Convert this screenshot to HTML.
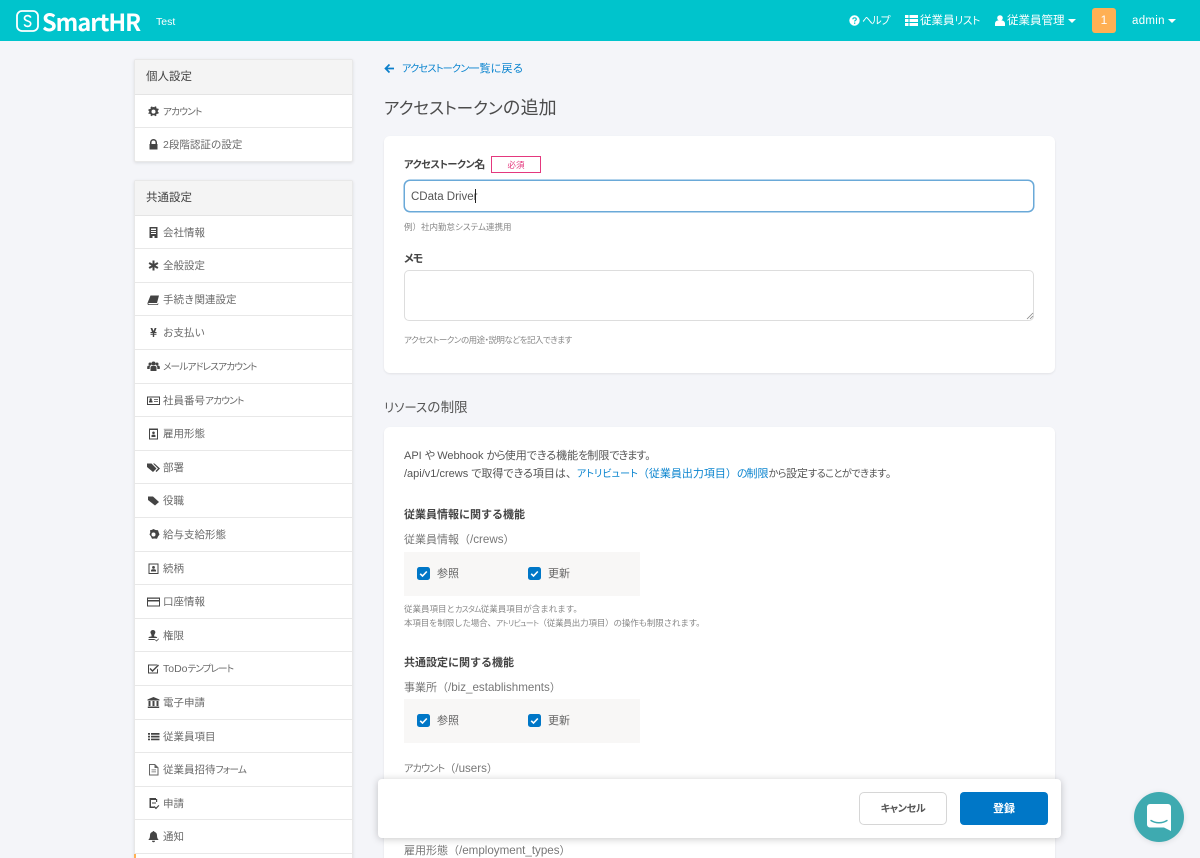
<!DOCTYPE html>
<html lang="ja"><head><meta charset="utf-8"><title>SmartHR</title>
<style>
*{box-sizing:border-box}
html,body{margin:0;padding:0;width:1200px;height:858px;overflow:hidden;background:#f4f5f9}
body{position:relative;font-family:"Liberation Sans","Noto Sans CJK JP",sans-serif;color:#444}
i{font-style:normal}
i.k{font-feature-settings:"palt";font-size:.92em;letter-spacing:-.085em}
i.h{font-feature-settings:"palt";letter-spacing:-.09em}
i.p{font-feature-settings:"palt"}
i.l{font-size:11.6px}
.a{position:absolute;white-space:nowrap}
.t{position:absolute;white-space:nowrap;line-height:16px;height:16px;margin-top:1px}
.hd{left:0;top:0;width:1200px;height:41px;background:#00c4cc}
.w{color:#fff;font-size:11.5px;font-weight:400}
.box{position:absolute;left:134px;width:219px;background:#fff;border:1px solid #e8e8e8;box-shadow:0 1px 3px rgba(0,0,0,.1);border-radius:2px}
.sh{position:absolute;left:0;right:0;top:0;height:34.6px;background:#f4f4f4;border-bottom:1px solid #e4e4e4;font-size:11.5px;line-height:35px;padding-left:11px;color:#444}
.r{position:absolute;left:0;right:0;height:33.6px;border-bottom:1px solid #e8e8e8}
.r span{position:absolute;left:28px;top:9px;font-size:10.5px;line-height:16px;color:#6a6a6a;white-space:nowrap}
.r svg{position:absolute;left:12px;top:10px;width:13px;height:13px;fill:#444}
.card{position:absolute;left:384px;width:670.5px;background:#fff;border-radius:6px;box-shadow:0 1px 2px rgba(0,0,0,.08)}
.lb{font-size:11px;font-weight:700;color:#444}
.hint{font-size:8.5px;color:#888;margin-top:0}
.sub{font-size:11px;color:#777}
.chk{position:absolute;width:13px;height:13px;background:#0077c7;border-radius:2.5px}
.chk svg{position:absolute;left:0;top:0;width:13px;height:13px}
.cbx{position:absolute;left:404px;width:236px;height:44px;background:#f8f7f6}
.cl{font-size:11px;color:#666}
a{color:#0a84cf;text-decoration:none}
</style></head><body>

<div class="a hd"></div>
<svg class="a" style="left:16px;top:10px" width="23" height="22" viewBox="0 0 23 22"><rect x="1" y="1" width="21" height="20" rx="5" fill="none" stroke="#fff" stroke-width="1.8"/><path d="M14.8 7.6c-.6-1.3-1.9-2-3.3-2-1.800 0-3 1.200-3 2.700 0 3.400 6.200 2 6.200 5.300 0 1.600-1.300 2.800-3.100 2.800-1.500 0-2.700-.8-3.300-2.100" fill="none" stroke="#fff" stroke-width="1.700"/></svg>
<div class="a" style="left:42px;top:6px;font-family:'Noto Sans CJK JP','Liberation Sans',sans-serif;font-size:23.5px;letter-spacing:-1px;line-height:30px;font-weight:700;color:#fff">SmartHR</div>
<div class="t w" style="left:156px;top:13px;font-size:10.5px">Test</div>

<svg class="a" style="left:849px;top:15px" width="11" height="11" viewBox="0 0 11 11"><circle cx="5.500" cy="5.500" r="5.200" fill="#fff"/><path d="M3.800 4.300c.1-1 .9-1.500 1.800-1.500 1 0 1.700.6 1.700 1.400 0 1.200-1.700 1.200-1.700 2.300" fill="none" stroke="#00c4cc" stroke-width="1.200"/><rect x="5" y="7.500" width="1.300" height="1.300" fill="#00c4cc"/></svg>
<div class="t w" style="left:862px;top:12px"><i class="k">ヘルプ</i></div>
<svg class="a" style="left:905px;top:15px" width="13" height="11" viewBox="0 0 13 11" fill="#fff"><rect x="0" y="0" width="3.500" height="3"/><rect x="4.500" y="0" width="8.500" height="3"/><rect x="0" y="4" width="3.500" height="3"/><rect x="4.500" y="4" width="8.500" height="3"/><rect x="0" y="8" width="3.500" height="3"/><rect x="4.500" y="8" width="8.500" height="3"/></svg>
<div class="t w" style="left:920px;top:12px">従業員<i class="k" style="letter-spacing:-.02em">リスト</i></div>
<svg class="a" style="left:995px;top:15px" width="10" height="11" viewBox="0 0 10 11" fill="#fff"><circle cx="5" cy="3" r="2.800"/><path d="M0 11V8.500C0 6.800 1.500 5.500 3 5.500h4c1.500 0 3 1.300 3 3V11z"/></svg>
<div class="t w" style="left:1007px;top:12px">従業員管理</div>
<svg class="a" style="left:1068px;top:19px" width="8" height="4" viewBox="0 0 8 4"><path d="M0 0h8L4 4z" fill="#fff"/></svg>
<div class="a" style="left:1092px;top:8px;width:24px;height:25px;background:#ffb054;border-radius:3px;color:#fff;font-size:12px;line-height:25px;text-align:center">1</div>
<div class="t w" style="left:1132px;top:12px;font-size:11.5px;letter-spacing:.3px">admin</div>
<svg class="a" style="left:1168px;top:19px" width="8" height="4" viewBox="0 0 8 4"><path d="M0 0h8L4 4z" fill="#fff"/></svg>

<!-- sidebar 1 -->
<div class="box" style="top:59px;height:103px">
<div class="sh">個人設定</div>
<div class="r" style="top:34.600px"><svg viewBox="0 0 13 13"><path d="M6.500 2l1 .2.5-1 1.500.7-.3 1.100.9.800 1-.4.700 1.500-1 .6v1.400l1 .6-.7 1.500-1-.4-.9.8.3 1.100-1.500.7-.5-1H5.500l-.5 1-1.500-.7.3-1.100-.9-.8-1 .4L1.200 8l1-.6V6l-1-.6.7-1.500 1 .4.900-.8-.3-1.100L5 1.200l.5 1zm0 2.600a2 2 0 100 4 2 2 0 000-4z"/></svg><span><i class="k">アカウント</i></span></div>
<div class="r" style="top:68.200px;border:0"><svg viewBox="0 0 13 13"><path d="M3 6V4.500a3.500 3.500 0 017 0V6h.5v5.500h-8V6zm1.500 0h4V4.500a2 2 0 00-4 0z"/></svg><span>2段階認証の設定</span></div>
</div>

<!-- sidebar 2 -->
<div class="box" style="top:180px;height:690px">
<div class="sh">共通設定</div>
<div class="r" style="top:34.600px"><svg viewBox="0 0 13 13"><path d="M2.500 1h8v11h-3v-2h-2v2h-3zM4 2.500v1.500h5V2.500zM4 5v1h5V5zM4 7v1h5V7z"/></svg><span>会社情報</span></div>
<div class="r" style="top:68.200px"><svg viewBox="0 0 13 13"><path d="M5.500 1.500h2v3.300l2.900-1.700 1 1.800-2.900 1.600 2.900 1.600-1 1.800-2.900-1.700v3.300h-2V8.200L2.600 9.900l-1-1.800 2.900-1.600-2.900-1.600 1-1.800 2.900 1.700z"/></svg><span>全般設定</span></div>
<div class="r" style="top:101.800px"><svg viewBox="0 0 13 13"><path d="M3.500 2.500h8.500l-2 7.500H2c-.8 0-1 1.200 0 1.200h8.500l.3-.9.700.2-.6 1.500H1.800C.5 12 .3 10.800.7 9.500z"/></svg><span>手続き関連設定</span></div>
<div class="r" style="top:135.400px"><svg viewBox="0 0 13 13"><path d="M3.500 2h1.800l1.200 3 1.200-3h1.800L8 6h1.500v1H7.200v.8h2.300v1H7.200V11H5.800V8.800H3.500v-1h2.300V7H3.500V6H5z"/></svg><span>お支払い</span></div>
<div class="r" style="top:169px"><svg viewBox="0 0 13 13"><circle cx="3" cy="4" r="1.500"/><circle cx="10" cy="4" r="1.500"/><circle cx="6.500" cy="3.500" r="2"/><path d="M.2 9V7c0-1 .8-1.500 2-1.500l1 .3-.5 1.500V9zM12.800 9V7c0-1-.8-1.500-2-1.500l-1 .3.500 1.500V9zM3.500 11V7.500c0-1 .8-1.500 1.500-1.500h3c.7 0 1.500.5 1.500 1.500V11z"/></svg><span><i class="k">メールアドレスアカウント</i></span></div>
<div class="r" style="top:202.600px"><svg viewBox="0 0 13 13"><path d="M0 2.500h13v8.500H0zm1 1v6.500h11V3.500zM2 8.500V7.500c0-.7.500-1 1-1h1.500c.5 0 1 .3 1 1v1zM3.700 4.300a1.200 1.200 0 110 2.400 1.200 1.200 0 010-2.400zM7 5h4v.8H7zM7 7h4v.8H7z"/></svg><span>社員番号<i class="k">アカウント</i></span></div>
<div class="r" style="top:236.200px"><svg viewBox="0 0 13 13"><path d="M2 1.500h9v11H2zm1 1.500v8.500h7V3zM6.500 4.500a1.300 1.300 0 110 2.600 1.300 1.300 0 010-2.600zM4.500 10V8.800c0-.8.700-1.200 1.300-1.200h1.400c.6 0 1.300.4 1.300 1.200V10z"/></svg><span>雇用形態</span></div>
<div class="r" style="top:269.800px"><svg viewBox="0 0 13 13"><path d="M0 2.500h4.500l5 5-3.500 3.500L0 6zM6 2.500h1.500l5.500 5-3.500 3.500-1-1 2.500-2.500z"/></svg><span>部署</span></div>
<div class="r" style="top:303.400px"><svg viewBox="0 0 13 13"><path d="M1 2.500h5l6 5.500-4 3.500-7-5.500z"/></svg><span>役職</span></div>
<div class="r" style="top:337px"><svg viewBox="0 0 13 13"><path d="M6.500 1l2 1 2.500.3.700 2.200.800 2-1.500 2-1 2.200-2.500-.2-2.500.2-1-2.200-1.500-2 .8-2L3 2.300 4.500 2zM6.500 4.500a2 2 0 100 4 2 2 0 000-4z"/></svg><span>給与支給形態</span></div>
<div class="r" style="top:370.600px"><svg viewBox="0 0 13 13"><path d="M1.500 1.500h10v10.500h-10zm1 1v8.500h8V2.500zM6.500 4a1.400 1.400 0 110 2.800 1.400 1.400 0 010-2.800zM4 9.500V8.500c0-.9.800-1.300 1.500-1.300h2c.7 0 1.500.4 1.500 1.300v1z"/></svg><span>続柄</span></div>
<div class="r" style="top:404.200px"><svg viewBox="0 0 13 13"><path d="M0 2.500h13v9H0zm1 1.200v1.300h11V3.700zM1 6.500v4h11v-4z"/></svg><span>口座情報</span></div>
<div class="r" style="top:437.800px"><svg viewBox="0 0 13 13"><path d="M6 1a2.300 2.300 0 012 3.500L7.200 6v1.500c1.500 0 3 .4 3 1.500H1.500c0-1.100 1.500-1.500 3-1.500V6l-.7-1.500A2.300 2.300 0 016 1zM1.500 10h6.300v1H1.500zM8.500 10.500l1 1 2-2 .5.500-2.500 2.500-1.500-1.500z"/></svg><span>権限</span></div>
<div class="r" style="top:471.400px"><svg viewBox="0 0 13 13"><path d="M1 2.500h9.500l-1 1H2v7h8V7.500l1-1V11.500H1zM3.500 6l2 2 5.500-5.500 1 1L5.500 10l-3-3z"/></svg><span>ToDo<i class="k" style="letter-spacing:-.1em">テンプレート</i></span></div>
<div class="r" style="top:505px"><svg viewBox="0 0 13 13"><path d="M6.500 1l6 2.500v1H.5v-1zM1.500 5h2v5h-2zM5.500 5h2v5h-2zM9.500 5h2v5h-2zM.8 10.500h11.400V12H.8z"/></svg><span>電子申請</span></div>
<div class="r" style="top:538.600px"><svg viewBox="0 0 13 13"><path d="M1 3h2v1.700H1zM4 3h8.500v1.700H4zM1 5.800h2v1.700H1zM4 5.800h8.500v1.700H4zM1 8.600h2v1.700H1zM4 8.600h8.500v1.700H4z"/></svg><span>従業員項目</span></div>
<div class="r" style="top:572.200px"><svg viewBox="0 0 13 13"><path d="M2 1h6l3.500 3.500V12.500H2zm1 1v9.500h7.500V5H7.500V2zM4.500 6.500h4.500v.8H4.500zM4.500 8.500h4.500v.8H4.500z" fill="#666"/></svg><span>従業員招待<i class="k">フォーム</i></span></div>
<div class="r" style="top:605.800px"><svg viewBox="0 0 13 13"><path d="M2.500 1h6.500v1h1.200v3H9V3H4v6.500h3V11H2.500zM5 5.500h4v1H5zM6.500 10l1-1 1.500 1.500 2.500-2.500.8.800L9 12.200z"/></svg><span>申請</span></div>
<div class="r" style="top:639.400px"><svg viewBox="0 0 13 13"><path d="M6.500 1c.5 0 .9.400.9.900 1.800.4 2.600 1.800 2.600 3.600 0 2.300.7 3.400 1.700 4.500H1.300C2.300 8.900 3 7.800 3 5.500c0-1.800.8-3.200 2.600-3.600 0-.5.400-.9.900-.9zM5 10.800h3A1.500 1.500 0 015 10.800z"/></svg><span>通知</span></div>
</div>
<div class="a" style="left:134px;top:854px;width:2px;height:4px;background:#ffb054"></div>

<!-- main -->
<svg class="a" style="left:384px;top:63px" width="11" height="11" viewBox="0 0 11 11"><path d="M5.500 1.500L1.500 5.500l4 4M1.800 5.500H10" fill="none" stroke="#0a7fcb" stroke-width="1.700"/></svg>
<div class="t" style="left:402px;top:60px;font-size:11px"><a><i class="k" style="letter-spacing:-.074em">アクセストークン</i>一覧に戻る</a></div>
<div class="a" style="left:384px;top:95px;font-size:18px;line-height:26px;color:#4c4c4c"><i class="k" style="letter-spacing:0">アクセストークン</i>の追加</div>

<div class="card" style="top:136px;height:237px"></div>
<div class="t lb" style="left:404px;top:156px"><i class="k" style="letter-spacing:-.041em">アクセストークン</i>名</div>
<div class="a" style="left:491px;top:156px;width:50px;height:17px;border:1px solid #e4387e;font-size:8.500px;line-height:16px;color:#e4387e;text-align:center">必須</div>
<div class="a" style="left:404px;top:180px;width:630px;height:32px;border:1px solid #6aa9d8;border-radius:6px;background:#fff;box-shadow:0 0 0 .5px #6aa9d8"></div>
<div class="t" style="left:411px;top:188px;font-size:11.500px;color:#555">CData Driver</div>
<div class="a" style="left:475px;top:189px;width:1px;height:14px;background:#222"></div>
<div class="t hint" style="left:404px;top:219px">例）社内勤怠<i class="p">システム</i>連携用</div>
<div class="t lb" style="left:404px;top:250px"><i class="h">メモ</i></div>
<div class="a" style="left:404px;top:270px;width:630px;height:51px;border:1px solid #ddd;border-radius:5px;background:#fff"></div>
<svg class="a" style="left:1026px;top:312px" width="8" height="8" viewBox="0 0 8 8"><path d="M1 7l6-6M4 7l3-3" stroke="#888" stroke-width=".8"/></svg>
<div class="t hint" style="left:404px;top:332px;font-feature-settings:'palt';letter-spacing:-.5px">アクセストークンの用途・説明などを記入できます</div>

<div class="a" style="left:384px;top:398px;font-size:13.500px;line-height:20px;color:#555"><i class="k" style="letter-spacing:0">リソース</i>の制限</div>

<div class="card" style="top:427px;height:460px"></div>
<div class="t" style="left:404px;top:447px;font-size:11px;color:#555">API <i class="h">や</i> Webhook <i class="h">から</i>使用<i class="p">できる</i>機能<i class="h">を</i>制限<i class="h">できます</i>。</div>
<div class="t" style="left:404px;top:465px;font-size:11px;color:#555">/api/v1/crews <i class="p">で</i>取得<i class="p">できる</i>項目<i class="p">は</i>、<a><i class="k" style="letter-spacing:0">アトリビュート</i>（従業員出力項目）<i class="h">の</i>制限</a><i class="k" style="letter-spacing:-.05em">から</i>設定<i class="k" style="letter-spacing:-.05em">することができます</i>。</div>

<div class="t lb" style="left:404px;top:506px">従業員情報に関する機能</div>
<div class="t sub" style="left:404px;top:531px">従業員情報（<i class="l">/crews</i>）</div>
<div class="cbx" style="top:552px"></div>
<div class="chk" style="left:417px;top:567px"><svg viewBox="0 0 13 13"><path d="M3.200 6.800l2.300 2.200 4.300-4.500" fill="none" stroke="#fff" stroke-width="1.600"/></svg></div>
<div class="t cl" style="left:437px;top:565px">参照</div>
<div class="chk" style="left:528px;top:567px"><svg viewBox="0 0 13 13"><path d="M3.200 6.800l2.300 2.200 4.300-4.500" fill="none" stroke="#fff" stroke-width="1.600"/></svg></div>
<div class="t cl" style="left:548px;top:565px">更新</div>
<div class="t hint" style="left:404px;top:601px">従業員項目と<i class="k">カスタム</i>従業員項目が含まれます。</div>
<div class="t hint" style="left:404px;top:615px;letter-spacing:-.15px">本項目を制限した場合、<i class="k">アトリビュート</i>（従業員出力項目）の操作も制限されます。</div>

<div class="t lb" style="left:404px;top:654px">共通設定に関する機能</div>
<div class="t sub" style="left:404px;top:679px">事業所（<i class="l">/biz_establishments</i>）</div>
<div class="cbx" style="top:699px"></div>
<div class="chk" style="left:417px;top:714px"><svg viewBox="0 0 13 13"><path d="M3.200 6.800l2.300 2.200 4.300-4.500" fill="none" stroke="#fff" stroke-width="1.600"/></svg></div>
<div class="t cl" style="left:437px;top:712px">参照</div>
<div class="chk" style="left:528px;top:714px"><svg viewBox="0 0 13 13"><path d="M3.200 6.800l2.300 2.200 4.300-4.500" fill="none" stroke="#fff" stroke-width="1.600"/></svg></div>
<div class="t cl" style="left:548px;top:712px">更新</div>

<div class="t sub" style="left:404px;top:760px"><i class="k">アカウント</i>（<i class="l">/users</i>）</div>
<div class="t sub" style="left:404px;top:842px">雇用形態（<i class="l">/employment_types</i>）</div>

<!-- bottom bar -->
<div class="a" style="left:378px;top:779px;width:683px;height:59px;background:#fff;border-radius:4px;box-shadow:0 1px 8px rgba(0,0,0,.22)"></div>
<div class="a" style="left:859px;top:792px;width:88px;height:33px;background:#fff;border:1px solid #d6d6d6;border-radius:5px;font-size:11px;font-weight:700;line-height:33px;text-align:center;color:#555"><i class="k" style="letter-spacing:-.04em">キャンセル</i></div>
<div class="a" style="left:960px;top:792px;width:88px;height:33px;background:#0077c7;border-radius:4px;font-size:11px;font-weight:700;line-height:35px;text-align:center;color:#fff">登録</div>

<!-- chat -->
<div class="a" style="left:1134px;top:792px;width:50px;height:50px;border-radius:50%;background:#3eaab0;box-shadow:0 1px 6px rgba(0,0,0,.1)"></div>
<svg class="a" style="left:1147px;top:804px" width="24" height="27" viewBox="0 0 24 27"><path d="M3 0h18a3 3 0 013 3v24l-7-3.500H3a3 3 0 01-3-3V3a3 3 0 013-3z" fill="#fff"/><path d="M4 16.500c4.500 3 11.500 3 16 0" fill="none" stroke="#3eaab0" stroke-width="1.400" stroke-linecap="round"/></svg>
</body></html>
